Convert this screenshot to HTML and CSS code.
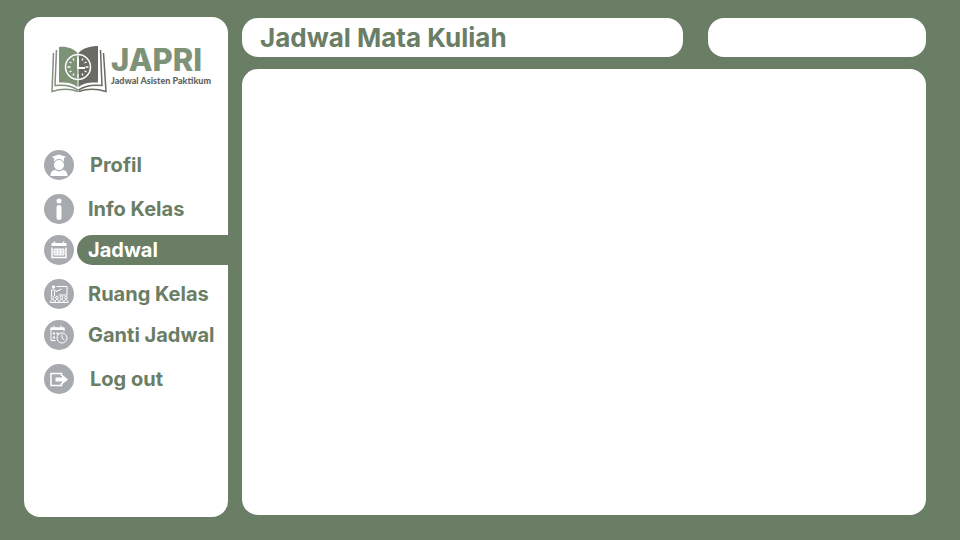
FILE: index.html
```html
<!DOCTYPE html>
<html lang="id">
<head>
<meta charset="utf-8">
<meta name="viewport" content="width=device-width, initial-scale=1">
<title>Jadwal Mata Kuliah</title>
<link rel="stylesheet" href="styles.css">
</head>
<body>
<aside class="sidebar">
  <div class="brand">
    <svg class="brand-mark" viewBox="0 0 58 50" aria-hidden="true">
      <path class="sage" d="M9 3c7-1 14 1 18.500 6v34c-4.500-4-11-5-18.500-4.500z"/>
      <path class="stone" d="M48 2c-8 0-15 2-19.500 7v34c4.500-4 12-5 19.500-4.500z"/>
      <path class="page" d="M6.500 6L5 41.500c9-1 17 0 23 4.500M3.500 9L2 47.500c9-3 18-3 26 0"/>
      <path class="page page-dark" d="M50.500 6L52 41.500c-9-1-17 0-23.500 4.500M53.500 9L56 47.500c-9-3-19-3-27.500 0"/>
      <circle class="dial" cx="28" cy="23" r="12.500"/>
      <path class="ticks" d="M28 12.500v3M28 30.500v3M17.500 23h3M35.500 23h3M23 14.500l1 2M33 14.500l-1 2M19.500 18l2 1M36.500 18l-2 1M19.500 28l2-1M36.500 28l-2-1M23 31.500l1-2M33 31.500l-1-2"/>
      <path class="hands" d="M28 15v9h7"/>
    </svg>
    <div class="brand-text">
      <span class="brand-name">JAPRI</span>
      <span class="brand-tag">Jadwal Asisten Paktikum</span>
    </div>
  </div>
  <nav class="menu" aria-label="Menu utama">
    <div class="menu-group menu-group-account">
      <a class="item" href="#profil">
        <svg class="icon" viewBox="0 0 30 30" aria-hidden="true"><circle class="disc" cx="15" cy="15" r="15"/><path class="fill" d="M15 4.500l7.500 2.500-2.500 1v3.500H10V8L7.500 7zM6.500 26c0-4 2-6 5-6l3.500 1.500 3.500-1.500c3 0 5 2 5 6z"/><circle class="head" cx="15" cy="15" r="5.500"/></svg>
        <span class="label">Profil</span>
      </a>
    </div>
    <div class="menu-group">
      <a class="item" href="#info">
        <svg class="icon" viewBox="0 0 30 30" aria-hidden="true"><circle class="disc" cx="15" cy="15" r="15"/><circle class="fill" cx="15" cy="7" r="2.500"/><rect class="fill" x="12.500" y="11" width="5" height="15" rx="2.500"/></svg>
        <span class="label">Info Kelas</span>
      </a>
      <a class="item item-active" href="#jadwal" aria-current="page">
        <svg class="icon" viewBox="0 0 30 30" aria-hidden="true"><circle class="disc" cx="15" cy="15" r="15"/><path class="line" d="M8 12.500v10h14v-10M10.500 6.500v2M19.500 6.500v2"/><path class="fill" d="M7.500 8h15v3h-15z"/><path class="dates" d="M10 14h10v6H10zM13.500 14v6M16.500 14v6M10 17h10"/></svg>
        <span class="label">Jadwal</span>
      </a>
    </div>
    <div class="menu-group">
      <a class="item" href="#ruang">
        <svg class="icon" viewBox="0 0 30 30" aria-hidden="true"><circle class="disc" cx="15" cy="15" r="15"/><path class="thin" d="M12.500 7.500H23V16h-8M12.500 12.500l5-2.500"/><circle class="fill" cx="9.500" cy="8" r="1.700"/><path class="thin" d="M7.500 17v-6h3l2.500 1.500M10.500 12v5"/><g class="thin"><circle cx="8.500" cy="18.500" r="1.300"/><circle cx="13" cy="18.500" r="1.300"/><circle cx="17.500" cy="18.500" r="1.300"/><circle cx="22" cy="18.500" r="1.300"/><path d="M6.500 23.500c0-4 4-4 4 0zM11 23.500c0-4 4-4 4 0zM15.500 23.500c0-4 4-4 4 0zM20 23.500c0-4 4-4 4 0z"/></g></svg>
        <span class="label">Ruang Kelas</span>
      </a>
      <a class="item" href="#ganti">
        <svg class="icon" viewBox="0 0 30 30" aria-hidden="true"><circle class="disc" cx="15" cy="15" r="15"/><path class="thin" d="M11.500 20.500H7V8h13v3.500M10 5.500v3M17 5.500v3"/><path class="fill" d="M6.500 7.500h14v2.500h-14zM9 12.500h2v2H9zM12.500 12.500h2v2h-2zM9 16.500h2v2H9z"/><circle class="thin" cx="18" cy="18" r="5"/><path class="thin" d="M18 14.500V18l2.500 2"/></svg>
        <span class="label">Ganti Jadwal</span>
      </a>
    </div>
    <div class="menu-group menu-group-account">
      <a class="item" href="#logout">
        <svg class="icon" viewBox="0 0 30 30" aria-hidden="true"><circle class="disc" cx="15" cy="15" r="15"/><path class="line" d="M17.500 12V9.500H7v12h10.500V19"/><path class="fill" d="M11.500 13.500H18V10.500l6 5-6 5v-3h-6.500z"/></svg>
        <span class="label">Log out</span>
      </a>
    </div>
  </nav>
</aside>
<main class="main">
  <header class="topbar">
    <h1 class="title">Jadwal Mata Kuliah</h1>
    <div class="account"></div>
  </header>
  <section class="content"></section>
</main>
</body>
</html>
```
FILE: styles.css
```css
:root {
  --green: #6a7d65;
  --grey: #a7aaaf;
  --radius: 16px;
}

* {
  box-sizing: border-box;
}

body {
  margin: 0;
  min-height: 100vh;
  display: flex;
  gap: 14px;
  padding: 17px 34px 23px 24px;
  background: var(--green);
  color: var(--green);
  font-family: Inter, "Liberation Sans", sans-serif;
  font-weight: 700;
}

.sidebar {
  flex: 0 0 204px;
  background: #fff;
  border-radius: var(--radius);
}

.brand {
  display: flex;
  gap: 3px;
  padding: 27px 0 0 26px;
}

.brand-mark {
  flex: none;
  width: 58px;
  height: 50px;
}

.sage { fill: #7d9277; }
.stone { fill: #6a6b64; }
.page { fill: none; stroke: #85907f; stroke-width: 1.5; }
.page-dark { stroke: #6a6b64; }
.dial { fill: none; stroke: #fff; stroke-width: 1.5; }
.ticks { stroke: #fff; stroke-width: 1.3; }
.hands { fill: none; stroke: #fff; stroke-width: 2; }

.brand-text {
  display: flex;
  flex-direction: column;
  white-space: nowrap;
}

.brand-name {
  color: #7d9277;
  font-size: 31px;
  line-height: 31px;
  font-weight: 800;
}

.brand-tag {
  color: #62635b;
  font-family: Lato, sans-serif;
  font-size: 9px;
  line-height: 12px;
  font-weight: 900;
}

.menu {
  display: flex;
  flex-direction: column;
  gap: 14px;
  padding: 56px 0 24px 20px;
}

.menu-group {
  display: flex;
  flex-direction: column;
  gap: 11px;
}

.item {
  display: flex;
  gap: 3px;
  color: inherit;
  text-decoration: none;
}

.icon {
  flex: none;
  width: 30px;
  height: 30px;
}

.disc { fill: var(--grey); }
.fill { fill: #fff; }
.head { fill: #fff; stroke: var(--grey); stroke-width: 1; }
.line { fill: none; stroke: #fff; stroke-width: 1.5; }
.thin { fill: none; stroke: #fff; stroke-width: 1; }
.dates { fill: #d9dadd; stroke: #fff; stroke-width: 1; }

.label {
  flex: 1;
  padding-left: 11px;
  border-radius: 15px 0 0 15px;
  font-size: 20px;
  line-height: 30px;
  white-space: nowrap;
}

.menu-group-account .label {
  padding-left: 13px;
}

.item-active .label {
  background: var(--green);
  color: #fff;
}

.main {
  flex: 1;
  min-width: 0;
  display: flex;
  flex-direction: column;
  gap: 12px;
  padding: 1px 0 2px;
}

.topbar {
  display: grid;
  grid-template-columns: 441fr 218fr;
  gap: 25px;
}

.title,
.account {
  margin: 0;
  background: #fff;
  border-radius: var(--radius);
}

.title {
  padding: 0 18px;
  font-size: 26px;
  line-height: 39px;
}

.content {
  flex: 1;
  background: #fff;
  border-radius: var(--radius);
}
```
